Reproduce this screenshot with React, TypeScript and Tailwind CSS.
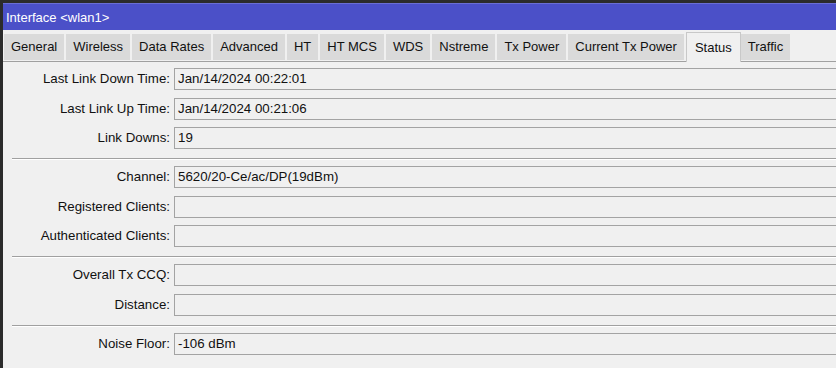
import React from 'react';

const tabs = [
  'General',
  'Wireless',
  'Data Rates',
  'Advanced',
  'HT',
  'HT MCS',
  'WDS',
  'Nstreme',
  'Tx Power',
  'Current Tx Power',
  'Status',
  'Traffic',
];

type Row = { label: string; value: string } | 'sep';

const rows: Row[] = [
  { label: 'Last Link Down Time:', value: 'Jan/14/2024 00:22:01' },
  { label: 'Last Link Up Time:', value: 'Jan/14/2024 00:21:06' },
  { label: 'Link Downs:', value: '19' },
  'sep',
  { label: 'Channel:', value: '5620/20-Ce/ac/DP(19dBm)' },
  { label: 'Registered Clients:', value: '' },
  { label: 'Authenticated Clients:', value: '' },
  'sep',
  { label: 'Overall Tx CCQ:', value: '' },
  { label: 'Distance:', value: '' },
  'sep',
  { label: 'Noise Floor:', value: '-106 dBm' },
];

function Field({ label, value }: { label: string; value: string }) {
  return (
    <div className="flex items-center h-[22px] mt-[3.5px] mb-[4px]">
      <div className="w-[171px] shrink-0 text-right pr-[4px] text-[13.3px]">{label}</div>
      <div className="flex-1 h-[22px] border border-[#a3a3a3] border-r-0 bg-[#f0f0f0] flex items-center pl-[3px] whitespace-nowrap text-[13.3px]">
        {value}
      </div>
    </div>
  );
}

export default function App() {
  return (
    <div
      className="w-[836px] h-[368px] overflow-hidden bg-[#f0f0f0] border-t-[3px] border-l-[3px] border-[#2b2b2b] text-[13px] text-[#111]"
      style={{ fontFamily: '"Liberation Sans", Arial, sans-serif' }}
    >
      <div className="h-[27px] bg-[#4b50c8] text-white flex items-center pl-[3px] pt-[2px] border-t border-[#6a6ed4]">
        Interface &lt;wlan1&gt;
      </div>
      <div className="flex items-end h-[32px] pl-[1px] border-b border-[#a0a0a0]">
        {tabs.map((t) => {
          const active = t === 'Status';
          return (
            <div
              key={t}
              className={
                active
                  ? 'h-[30px] px-[8px] flex items-start pt-[5px] bg-[#f0f0f0] border border-b-0 border-[#c8c8c8] mb-[-1px]'
                  : 'h-[26px] mb-[1px] px-[7px] flex items-center bg-[#dadada] border-r-2 border-[#f0f0f0]'
              }
            >
              {t}
            </div>
          );
        })}
      </div>
      <div className="flex flex-col pt-[2.5px]">
        {rows.map((r, i) =>
          r === 'sep' ? (
            <div key={i} className="ml-[9px] h-[2px] mt-[5px] mb-[2.5px] border-t border-[#a0a0a0] bg-white" />
          ) : (
            <Field key={i} label={r.label} value={r.value} />
          )
        )}
      </div>
    </div>
  );
}
